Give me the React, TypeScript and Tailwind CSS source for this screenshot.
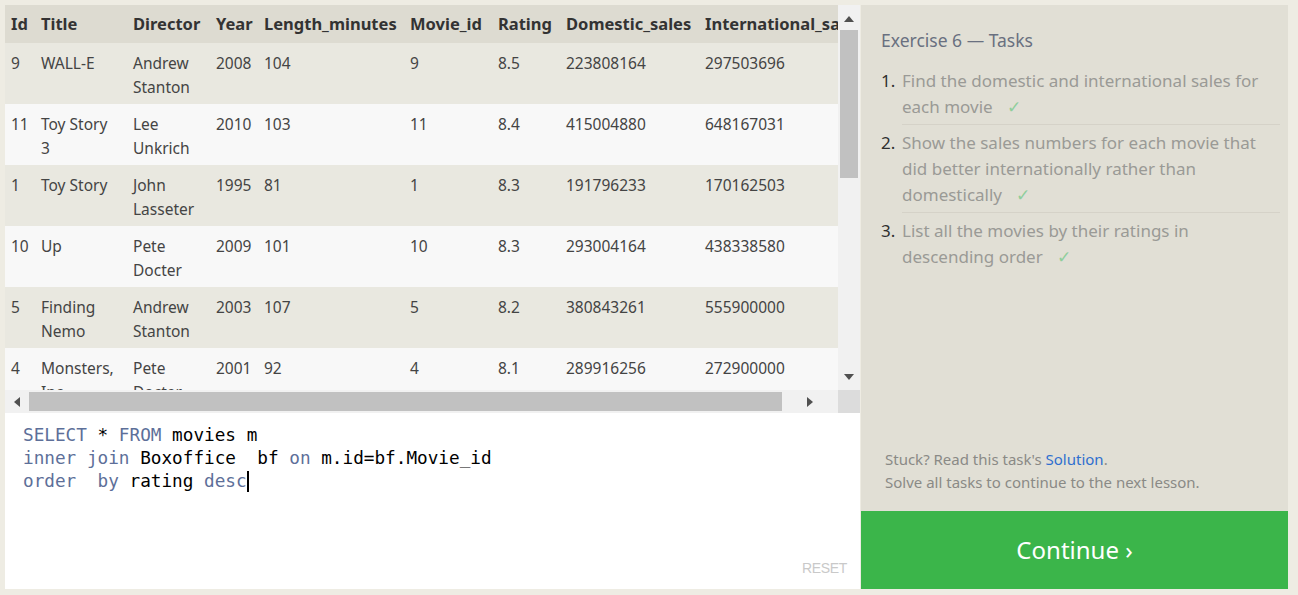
import React from 'react';

interface Movie {
  id: string;
  title: string[];
  director: string[];
  year: string;
  length: string;
  movieId: string;
  rating: string;
  domestic: string;
  international: string;
}

const movies: Movie[] = [
  { id: '9', title: ['WALL-E'], director: ['Andrew', 'Stanton'], year: '2008', length: '104', movieId: '9', rating: '8.5', domestic: '223808164', international: '297503696' },
  { id: '11', title: ['Toy Story', '3'], director: ['Lee', 'Unkrich'], year: '2010', length: '103', movieId: '11', rating: '8.4', domestic: '415004880', international: '648167031' },
  { id: '1', title: ['Toy Story'], director: ['John', 'Lasseter'], year: '1995', length: '81', movieId: '1', rating: '8.3', domestic: '191796233', international: '170162503' },
  { id: '10', title: ['Up'], director: ['Pete', 'Docter'], year: '2009', length: '101', movieId: '10', rating: '8.3', domestic: '293004164', international: '438338580' },
  { id: '5', title: ['Finding', 'Nemo'], director: ['Andrew', 'Stanton'], year: '2003', length: '107', movieId: '5', rating: '8.2', domestic: '380843261', international: '555900000' },
  { id: '4', title: ['Monsters,', 'Inc.'], director: ['Pete', 'Docter'], year: '2001', length: '92', movieId: '4', rating: '8.1', domestic: '289916256', international: '272900000' },
];

const columns = [
  { label: 'Id', width: 'w-[30px]' },
  { label: 'Title', width: 'w-[92px]' },
  { label: 'Director', width: 'w-[83px]' },
  { label: 'Year', width: 'w-[48px]' },
  { label: 'Length_minutes', width: 'w-[146px]' },
  { label: 'Movie_id', width: 'w-[88px]' },
  { label: 'Rating', width: 'w-[68px]' },
  { label: 'Domestic_sales', width: 'w-[139px]' },
  { label: 'International_sales', width: 'w-[190px]' },
];

const tasks = [
  ['Find the domestic and international sales for', 'each movie'],
  ['Show the sales numbers for each movie that', 'did better internationally rather than', 'domestically'],
  ['List all the movies by their ratings in', 'descending order'],
];

const Lines: React.FC<{ lines: string[] }> = ({ lines }) => (
  <>
    {lines.map((l, i) => (
      <div key={i} className="whitespace-nowrap">{l}</div>
    ))}
  </>
);

const Triangle: React.FC<{ dir: 'up' | 'down' | 'left' | 'right' }> = ({ dir }) => {
  const points = {
    up: '0,8 5,2 10,8',
    down: '0,2 5,8 10,2',
    left: '8,0 2,5 8,10',
    right: '2,0 8,5 2,10',
  }[dir];
  return (
    <svg width="10" height="10" viewBox="0 0 10 10">
      <polygon points={points} fill="#505050" />
    </svg>
  );
};

const K: React.FC<{ children: React.ReactNode }> = ({ children }) => (
  <span className="text-[#5d6f99]">{children}</span>
);

export default function App() {
  return (
    <div className="w-[1298px] h-[595px] bg-[#eeece3] pt-[5px] pl-[5px] flex font-['Noto_Sans',sans-serif] overflow-hidden">
      {/* Left: results + editor */}
      <div className="w-[856px] h-[584px] flex flex-col">
        <div className="h-[408px] flex flex-col">
          <div className="flex h-[385px]">
            <div className="w-[833px] overflow-hidden bg-[#f8f8f8]">
              <table className="table-fixed border-collapse text-left w-[884px]">
                <thead>
                  <tr className="bg-[#dddbd1] h-[38px]">
                    {columns.map((c) => (
                      <th key={c.label} className={`${c.width} px-[6px] text-[16.5px] font-bold text-[#333] whitespace-nowrap leading-[24px]`}>
                        {c.label}
                      </th>
                    ))}
                  </tr>
                </thead>
                <tbody className="text-[15.5px] text-[#444] leading-[24px]">
                  {movies.map((m, i) => (
                    <tr key={m.id} className={i % 2 === 0 ? 'bg-[#e9e8e0]' : 'bg-[#f8f8f8]'}>
                      {[
                        [m.id],
                        m.title,
                        m.director,
                        [m.year],
                        [m.length],
                        [m.movieId],
                        [m.rating],
                        [m.domestic],
                        [m.international],
                      ].map((cell, j) => (
                        <td key={j} className="px-[6px] pt-[8px] pb-[5px] align-top h-[61px]">
                          <Lines lines={cell} />
                        </td>
                      ))}
                    </tr>
                  ))}
                </tbody>
              </table>
            </div>
            {/* vertical scrollbar */}
            <div className="w-[22px] bg-[#f1f1f1] flex flex-col items-center">
              <div className="h-[25px] flex items-center justify-center pt-[2px]"><Triangle dir="up" /></div>
              <div className="w-[18px] h-[148px] bg-[#c1c1c1]" />
              <div className="flex-1" />
              <div className="h-[25px] flex items-center justify-center pb-[2px]"><Triangle dir="down" /></div>
            </div>
          </div>
          {/* horizontal scrollbar */}
          <div className="flex h-[23px]">
            <div className="w-[833px] bg-[#f1f1f1] flex items-center">
              <div className="w-[24px] flex justify-center"><Triangle dir="left" /></div>
              <div className="w-[753px] h-[19px] bg-[#c1c1c1]" />
              <div className="flex-1 flex justify-center"><Triangle dir="right" /></div>
            </div>
            <div className="w-[22px] bg-[#dcdcdc]" />
          </div>
        </div>

        {/* SQL editor */}
        <div className="h-[176px] bg-white flex flex-col mr-[1px]">
          <div className="flex-1 pl-[18px] pt-[11px] font-['DejaVu_Sans_Mono',monospace] text-[17.7px] leading-[23px] text-black whitespace-pre">
            <div><K>SELECT</K> * <K>FROM</K> movies m</div>
            <div><K>inner join</K> Boxoffice  bf <K>on</K> m.id=bf.Movie_id</div>
            <div className="flex items-center"><K>order  by</K> rating <K>desc</K><span className="inline-block w-[2px] h-[21px] bg-black" /></div>
          </div>
          <div className="flex justify-end pr-[13px] pb-[10px]">
            <span className="text-[14px] text-[#c9c9c9] font-['Liberation_Sans_Narrow','Liberation_Sans',sans-serif] tracking-tight">RESET</span>
          </div>
        </div>
      </div>

      {/* Right: tasks */}
      <div className="w-[427px] h-[584px] flex flex-col">
        <div className="flex-1 bg-[#e1dfd5] flex flex-col pl-[20px] pr-[8px]">
          <div className="pt-[23px] text-[17.5px] leading-[24px] text-[#697080]">Exercise 6 — Tasks</div>
          <ol className="mt-[16px] text-[17px] leading-[26px] text-[#9a9a96]">
            {tasks.map((t, i) => (
              <li key={i} className={`flex ${i === 0 ? '' : 'pt-[5px]'}`}>
                <span className="w-[21px] shrink-0 text-[#2f2f2f]">{i + 1}.</span>
                <div className={`flex-1 pb-[4px] ${i < tasks.length - 1 ? 'border-b border-[#d5d2c8]' : ''}`}>
                  {t.map((line, j) => (
                    <div key={j} className="whitespace-nowrap">
                      {line}
                      {j === t.length - 1 && <span className="ml-[14px] text-[#8fce9c]">✓</span>}
                    </div>
                  ))}
                </div>
              </li>
            ))}
          </ol>
          <div className="flex-1" />
          <div className="pl-[4px] pb-[17px] text-[15px] leading-[23px] text-[#8a8a86]">
            <div>Stuck? Read this task's <span className="text-[#2f6fcf]">Solution</span>.</div>
            <div>Solve all tasks to continue to the next lesson.</div>
          </div>
        </div>
        <div className="h-[78px] bg-[#3bb54a] flex items-center justify-center text-white text-[24px]">
          Continue ›
        </div>
      </div>
    </div>
  );
}
